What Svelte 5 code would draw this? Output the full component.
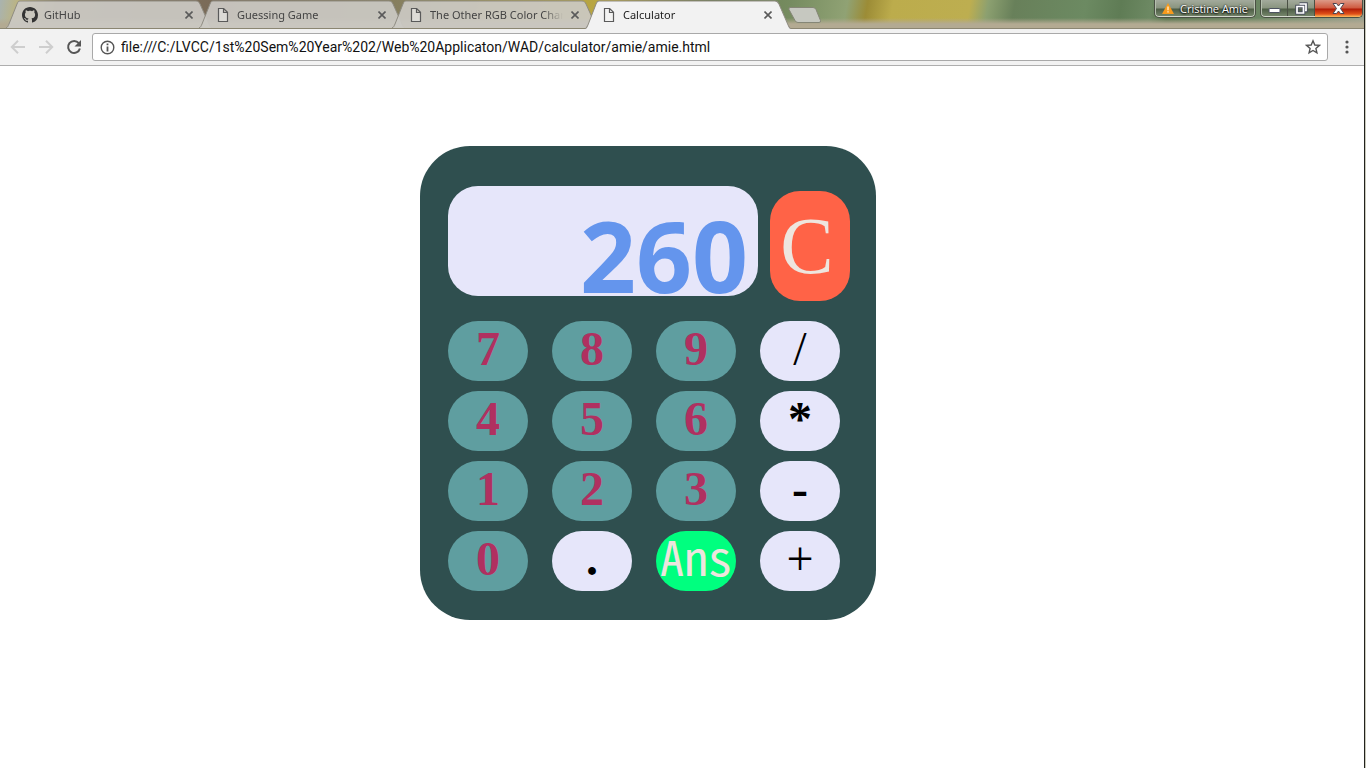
<script>
  const tabs = [
    { title: 'GitHub', icon: 'github' },
    { title: 'Guessing Game', icon: 'file' },
    { title: 'The Other RGB Color Chart', icon: 'file' },
    { title: 'Calculator', icon: 'file', active: true }
  ];
  const keys = ['7', '8', '9', '/', '4', '5', '6', '*', '1', '2', '3', '-', '0', '.', 'Ans', '+'];
  let display = $state('260');

  function kind(key) {
    if (key === 'Ans') return 'answer';
    if (key === '/' || key === '+') return 'operator light';
    return /\d/.test(key) ? 'digit' : 'operator';
  }

  function press(key) {
    if (key !== 'Ans') {
      display += key;
      return;
    }
    const parts = display.match(/\d+\.?\d*|[-+*/]/g) ?? ['0'];
    let total = Number(parts[0]);
    for (let i = 1; i + 1 < parts.length; i += 2) {
      const n = Number(parts[i + 1]);
      if (parts[i] === '+') total += n;
      else if (parts[i] === '-') total -= n;
      else if (parts[i] === '*') total *= n;
      else total /= n;
    }
    display = String(total);
  }
</script>

<div class="window">
  <header class="titlebar">
    <nav class="tabs">
      {#each tabs as tab}
        <div class="tab" class:active={tab.active}>
          <svg class="shape" viewBox="0 0 206 28" preserveAspectRatio="none" aria-hidden="true">
            <path class="fill" d="M0 28 C2 27 2 26 3 24 L11 4 C12 2 12 1 14 1 H190 C192 1 193 2 194 4 L203 24 C204 26 204 27 206 28 Z" />
            <path class="edge" d="M0 28 C2 27 2 26 3 24 L11 4 C12 2 12 1 14 1 H190 C192 1 193 2 194 4 L203 24 C204 26 204 27 206 28" />
          </svg>
          <div class="tab-row">
            <button class="tab-title">
              {#if tab.icon === 'github'}
                <svg width="16" height="16" viewBox="0 0 16 16" aria-hidden="true"><path fill="#333" d="M8 0C3.58 0 0 3.58 0 8c0 3.54 2.29 6.53 5.47 7.59.4.07.55-.17.55-.38 0-.19-.01-.82-.01-1.49-2.01.37-2.53-.49-2.69-.94-.09-.23-.48-.94-.82-1.13-.28-.15-.68-.52-.01-.53.63-.01 1.08.58 1.23.82.72 1.21 1.87.87 2.33.66.07-.52.28-.87.51-1.07-1.78-.2-3.64-.89-3.64-3.95 0-.87.31-1.59.82-2.15-.08-.2-.36-1.02.08-2.12 0 0 .67-.21 2.2.82.64-.18 1.32-.27 2-.27s1.36.09 2 .27c1.53-1.04 2.2-.82 2.2-.82.44 1.1.16 1.92.08 2.12.51.56.82 1.27.82 2.15 0 3.07-1.87 3.75-3.65 3.95.29.25.54.73.54 1.48 0 1.07-.01 1.93-.01 2.2 0 .21.15.46.55.38A8.01 8.01 0 0 0 16 8c0-4.42-3.58-8-8-8z" /></svg>
              {:else}
                <svg width="16" height="16" viewBox="0 0 16 16" aria-hidden="true"><path fill="#f4f4f2" fill-opacity=".5" stroke="#5a5a5a" stroke-width="1.2" d="M3.5 1.5h5.2l3.8 3.8v9.2h-9zM8.5 1.5v4h4" /></svg>
              {/if}
              <span>{tab.title}</span>
            </button>
            <button class="tab-close" aria-label="Close tab">
              <svg width="8" height="8" viewBox="0 0 8 8"><path stroke="#5a5a5a" stroke-width="1.6" d="M.5.5l7 7M7.5.5l-7 7" /></svg>
            </button>
          </div>
        </div>
      {/each}
      <button class="new-tab" aria-label="New tab">
        <svg width="34" height="16" viewBox="0 0 34 16"><path fill="#c6c8c0" stroke="#858676" d="M1.500.5H25q2 0 3 2l4.500 11q.5 2-1.500 2H10q-2 0-3-2L1 2.500Q.5.5 2 .5z" /></svg>
      </button>
    </nav>
    <div class="controls">
      <button class="profile">
        <svg width="12" height="11" viewBox="0 0 12 11" aria-hidden="true"><path fill="#f79a1c" d="M6 0l6 11H0z" /><path stroke="#fff3d8" stroke-width="1.300" d="M6 3.500v3.800M6 8.300v1.300" /></svg>
        Cristine Amie
      </button>
      <div class="win-buttons">
        <button class="minimize" aria-label="Minimize"><svg width="13" height="13" viewBox="0 0 13 13"><rect x="1" y="6.500" width="11" height="4" rx="1" fill="#fff" stroke="#4c5260" /></svg></button>
        <button class="restore" aria-label="Restore"><svg width="13" height="13" viewBox="0 0 13 13" fill="none"><path stroke="#4c5260" stroke-width="3.600" d="M4.500 2h6.500v6.500h-1M2 4.500h6.500V11H2z" /><path stroke="#fff" stroke-width="1.700" d="M4.500 2h6.500v6.500h-1M2 4.500h6.500V11H2z" /></svg></button>
        <button class="close" aria-label="Close"><svg width="13" height="11" viewBox="0 0 13 11"><path fill="#fff" stroke="#4c4550" d="M1 .5h3.500L6.500 3 8.500.5H12L8.500 5.500l3.500 5H8.500l-2-2.500-2 2.500H1l3.500-5z" /></svg></button>
      </div>
    </div>
  </header>

  <div class="toolbar">
    <button class="tool" aria-label="Back"><svg width="16" height="16" viewBox="0 0 16 16"><path fill="none" stroke="#cecece" stroke-width="2" d="M15 8H2.500M8 1.800L1.800 8 8 14.200" /></svg></button>
    <button class="tool" aria-label="Forward"><svg width="16" height="16" viewBox="0 0 16 16"><path fill="none" stroke="#cecece" stroke-width="2" d="M1 8h12.500M8 1.800L14.200 8 8 14.200" /></svg></button>
    <button class="tool" aria-label="Reload"><svg width="16" height="16" viewBox="0 0 16 16"><path fill="none" stroke="#555" stroke-width="2" d="M12.800 4.200A6 6 0 1 0 13.900 9.500" /><path fill="#555" d="M15 1v6.500H8.500z" /></svg></button>
    <div class="address">
      <svg width="15" height="15" viewBox="0 0 15 15" aria-hidden="true"><circle cx="7.500" cy="7.500" r="6.300" fill="none" stroke="#555" stroke-width="1.400" /><path stroke="#555" stroke-width="1.800" d="M7.500 3.500v1.700M7.500 6.500v5" /></svg>
      <input aria-label="Address" type="text" value="file:///C:/LVCC/1st%20Sem%20Year%202/Web%20Applicaton/WAD/calculator/amie/amie.html" />
      <button class="star" aria-label="Bookmark"><svg width="16" height="16" viewBox="0 0 16 16"><path fill="none" stroke="#555" stroke-width="1.400" d="M8 1.800l1.800 4.200 4.600.4-3.500 3 1 4.500L8 11.500l-3.900 2.400 1-4.500-3.500-3 4.600-.4z" /></svg></button>
    </div>
    <button class="menu" aria-label="Menu"><svg width="4" height="14" viewBox="0 0 4 14" fill="#555"><circle cx="2" cy="2" r="1.600" /><circle cx="2" cy="7" r="1.600" /><circle cx="2" cy="12" r="1.600" /></svg></button>
  </div>

  <main>
    <section class="calculator">
      <div class="top">
        <input class="display" type="text" aria-label="Display" readonly value={display} />
        <button class="clear" onclick={() => (display = '')}>C</button>
      </div>
      <div class="keys">
        {#each keys as key}
          <button class={kind(key)} onclick={() => press(key)}>{key}</button>
        {/each}
      </div>
    </section>
  </main>
</div>

<style>
  :global(body) {
    margin: 0;
    background: #fff;
  }
  * {
    box-sizing: border-box;
  }
  button,
  input {
    border: 0;
    padding: 0;
    margin: 0;
    background: none;
    font: inherit;
    color: inherit;
    outline: 0;
  }
  svg {
    display: block;
    flex: none;
  }
  .window {
    min-height: 100vh;
    display: flex;
    flex-direction: column;
    border-right: 1px solid #c9c9bb;
    box-shadow: inset -1px 0 #22221e;
    padding-right: 1px;
    font-family: 'Noto Sans', 'Open Sans', sans-serif;
  }
  .titlebar {
    height: 29px;
    display: flex;
    justify-content: space-between;
    border-bottom: 1px solid #8b8672;
    background:
      linear-gradient(to bottom, transparent 18px, #b3aa92 24px, #b3aa92 28px),
      linear-gradient(100deg, #a9b3b0 0, #beb47c 20px, #8a7f6a 60px, #7a6b58 210px, #87805f 400px, #a89a50 500px, #bba83e 605px, #8a8748 650px, #66764c 700px, #768c60 780px, #90a274 835px, #9c8c36 855px, #bcac4c 880px, #bdae50 956px, #8ca070 974px, #68805a 1000px, #6c8a62 1070px, #5f7c55 1105px, #6d8963 1135px, #527049 1152px, #708a68 1260px, #9aa08e 100%);
  }
  .tabs {
    display: flex;
    padding-left: 6px;
    min-width: 0;
  }
  .tab {
    display: grid;
    width: 206px;
    height: 28px;
    margin-right: -13px;
    color: #444;
    font-size: 11px;
  }
  .tab > * {
    grid-area: 1 / 1;
  }
  .shape {
    width: 100%;
    height: 28px;
  }
  .fill {
    fill: #cbc9c3;
    fill-opacity: 0.92;
  }
  .edge {
    fill: none;
    stroke: #8f8c82;
  }
  .active {
    z-index: 1;
    height: 29px;
    color: #222;
  }
  .active .shape {
    height: 29px;
  }
  .active .fill {
    fill: #f2f2f2;
    fill-opacity: 1;
  }
  .tab-row {
    display: flex;
    align-items: center;
    height: 28px;
    padding: 1px 15px 0 16px;
    z-index: 1;
    min-width: 0;
  }
  .tab-title {
    display: flex;
    align-items: center;
    gap: 6px;
    flex: 1;
    min-width: 0;
    overflow: hidden;
    white-space: nowrap;
    text-align: left;
  }
  .tab-title span {
    flex: 1;
    overflow: hidden;
    mask-image: linear-gradient(to left, transparent, #000 20px);
  }
  .tab-close {
    padding: 4px;
    margin-left: 4px;
  }
  .new-tab {
    margin-left: 10px;
    align-self: flex-start;
    padding-top: 7px;
  }
  .controls {
    display: flex;
    align-items: flex-start;
    gap: 4px;
    padding-right: 1px;
    color: #fff;
  }
  .profile,
  .win-buttons {
    height: 18px;
    border: 1px solid #4a5044;
    border-top: 0;
    border-radius: 0 0 5px 5px;
    box-shadow: inset 0 -1px #d3d8cd, inset 1px 0 #b5bfae, inset -1px 0 #b5bfae;
    background: linear-gradient(#a3aa9c 0, #89947f 8px, #4d5d45 9px, #7a8b70 100%);
  }
  .profile {
    display: flex;
    align-items: center;
    gap: 6px;
    padding: 0 7px;
    font-family: 'Open Sans', sans-serif;
    font-size: 11px;
    text-shadow: 0 0 2px #000, 0 1px 2px #000;
  }
  .win-buttons {
    display: flex;
    overflow: hidden;
  }
  .win-buttons button {
    display: flex;
    align-items: center;
    justify-content: center;
    width: 27px;
    height: 16px;
    border-right: 1px solid #4a5044;
  }
  .win-buttons .close {
    width: 47px;
    height: 17px;
    border: 0;
    background: linear-gradient(#dc9a88 0, #cf5a40 8px, #b01c08 9px, #e05018 14px, #ffc060 100%);
  }
  .toolbar {
    display: flex;
    align-items: center;
    height: 37px;
    padding: 0 15px 0 10px;
    background: #f2f2f2;
    border-bottom: 1px solid #aeaeae;
  }
  .tool {
    margin-right: 12px;
  }
  .address {
    flex: 1;
    display: flex;
    align-items: center;
    height: 28px;
    margin: 0 17px 0 -2px;
    padding: 0 6px 0 7px;
    gap: 6px;
    background: #fff;
    border: 1px solid #a9a9a9;
    border-radius: 3px;
  }
  .address input {
    flex: 1;
    min-width: 0;
    font-family: Roboto, sans-serif;
    font-size: 14px;
    color: #111;
  }
  main {
    flex: 1;
    padding: 80px 0;
  }
  .calculator {
    width: fit-content;
    margin-left: calc(50% - 262px);
    padding: 40px 26px 29px 28px;
    border-radius: 50px;
    background: #2f4f4f;
    font-family: 'Liberation Serif', serif;
  }
  .top {
    display: flex;
    align-items: flex-start;
    gap: 12px;
    margin-bottom: 20px;
  }
  .display {
    width: 310px;
    height: 110px;
    padding: 28px 10px 0;
    border-radius: 30px;
    background: #e6e6fa;
    color: #6495ed;
    font: 700 98px/78px 'Open Sans', sans-serif;
    text-align: right;
  }
  .clear {
    width: 80px;
    height: 110px;
    margin-top: 5px;
    padding-right: 6px;
    border-radius: 30px;
    background: #ff6347;
    color: #eee5de;
    font-size: 80px;
    line-height: 110px;
  }
  .keys {
    display: grid;
    grid-template-columns: repeat(4, 80px);
    gap: 10px 24px;
  }
  .keys button {
    height: 60px;
    border-radius: 30px;
    font-size: 48px;
    font-weight: 700;
    line-height: 56px;
    padding-bottom: 4px;
  }
  .keys .digit {
    background: #5f9ea0;
    color: #b03060;
  }
  .keys .operator {
    background: #e6e6fa;
    color: #000;
  }
  .keys .light {
    font-weight: 400;
  }
  .keys .answer {
    background: #00ff7f;
    color: #eee5de;
    font-family: 'Noto Sans CJK JP', sans-serif;
    font-weight: 400;
    font-feature-settings: 'hwid';
    line-height: 48px;
    padding-bottom: 14px;
  }
</style>
